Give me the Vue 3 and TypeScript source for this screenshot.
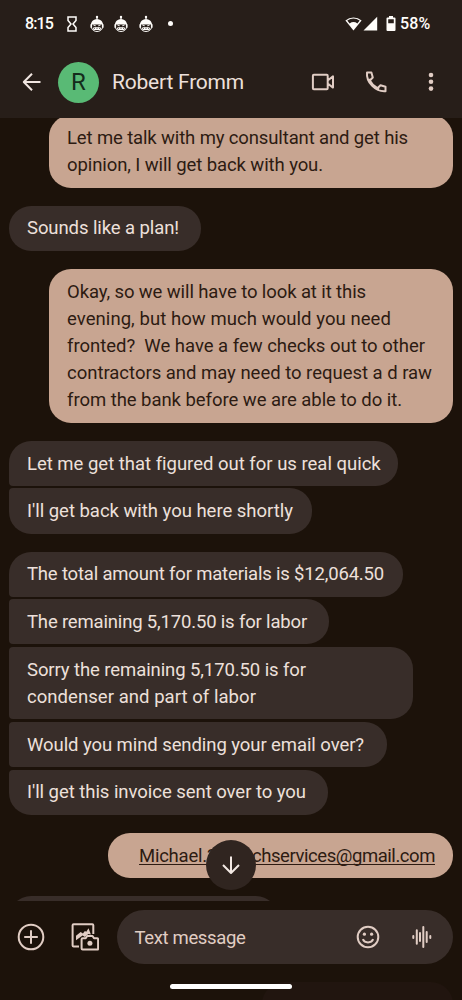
<script setup lang="ts">
import type { Directive } from 'vue'

interface Line { text: string; width: number }
interface Message {
  side: 'in' | 'out'
  place: 'single' | 'first' | 'middle' | 'last'
  width: number
  lines: Line[]
}

const messages: Message[] = [
  { side: 'out', place: 'single', width: 404, lines: [
    { text: 'Let me talk with my consultant and get his', width: 341 },
    { text: 'opinion, I will get back with you.', width: 256 },
  ] },
  { side: 'in', place: 'single', width: 191.5, lines: [{ text: 'Sounds like a plan!', width: 152 }] },
  { side: 'out', place: 'single', width: 404, lines: [
    { text: 'Okay, so we will have to look at it this', width: 299 },
    { text: 'evening, but how much would you need', width: 324 },
    { text: 'fronted?  We have a few checks out to other', width: 358 },
    { text: 'contractors and may need to request a d raw', width: 365 },
    { text: 'from the bank before we are able to do it.', width: 335 },
  ] },
  { side: 'in', place: 'first', width: 389, lines: [{ text: 'Let me get that figured out for us real quick', width: 353 }] },
  { side: 'in', place: 'last', width: 302.5, lines: [{ text: "I'll get back with you here shortly", width: 266 }] },
  { side: 'in', place: 'first', width: 393.5, lines: [{ text: 'The total amount for materials is $12,064.50', width: 357 }] },
  { side: 'in', place: 'middle', width: 320, lines: [{ text: 'The remaining 5,170.50 is for labor', width: 280 }] },
  { side: 'in', place: 'middle', width: 404, lines: [
    { text: 'Sorry the remaining 5,170.50 is for', width: 279 },
    { text: 'condenser and part of labor', width: 229 },
  ] },
  { side: 'in', place: 'middle', width: 378, lines: [{ text: 'Would you mind sending your email over?', width: 337 }] },
  { side: 'in', place: 'last', width: 318.5, lines: [{ text: "I'll get this invoice sent over to you", width: 279 }] },
]

// Distributes tracking so a label occupies its intended measure.
const vMeasure: Directive<HTMLElement, number> = {
  mounted(el, { value }) {
    const natural = el.getBoundingClientRect().width
    const count = (el.textContent ?? '').length
    el.style.letterSpacing = `${(value - natural) / count}px`
  },
}
</script>

<template>
  <div class="phone">
    <header class="top">
      <div class="status">
        <span class="time"><span v-measure="28">8:15</span></span>
        <svg class="hourglass" viewBox="0 0 10 16" width="10" height="16"><path d="M1 1h8v3.4L6 8l3 3.6V15H1v-3.4L4 8 1 4.4Z" /></svg>
        <svg v-for="n in 3" :key="n" class="bot" viewBox="0 0 14 18" width="14" height="18">
          <circle cx="7" cy="2" r="1.2" /><path d="M6.4 2h1.2v3H6.4zM1 9.6C1.3 2.4 12.7 2.4 13 9.6zM.4 9.2h1.5v3.6H.4zM12.1 9.2h1.5v3.6h-1.5z" />
          <path class="thin" d="M1.6 8.5v4.3c1 4.9 9.8 4.9 10.8 0V8.5M3.3 9.9l2.4.9M10.7 9.9l-2.4.9M3.6 12.8h6.8v1.7H3.6zM5.5 12.6v2M7 12.6v2M8.5 12.6v2" />
        </svg>
        <i class="dot"></i>
        <div class="signals">
          <svg viewBox="0 0 17 15" width="17" height="15"><path d="M8.5 14.5.4 4.4a13.2 13.2 0 0 1 16.2 0Z" /><path class="wifi-gap" d="M2.3 4.5a11.2 11.2 0 0 1 12.4 0L12.4 7.4a6.6 6.6 0 0 0-7.8 0Z" /></svg>
          <svg viewBox="0 0 15 15" width="15" height="15"><path d="M14.2.7v13.8H.5Z" /></svg>
          <svg class="battery" viewBox="0 0 10 15" width="10" height="15"><path fill-rule="evenodd" d="M3 0h4v1.5h1.5q1 0 1 1V14q0 1-1 1h-7q-1 0-1-1V2.5q0-1 1-1H3ZM2.2 3.2v4.1h5.6V3.2Z" /></svg>
          <span class="percent"><span v-measure="30.5">58%</span></span>
        </div>
      </div>
      <div class="bar">
        <svg class="back" viewBox="0 0 20 20" width="20" height="20"><path d="M18.5 10H2M10 1.8 1.8 10l8.2 8.2" /></svg>
        <div class="avatar">R</div>
        <div class="name"><span v-measure="132">Robert Fromm</span></div>
        <svg class="video" viewBox="0 0 24 18" width="24" height="18"><path d="M2.8 1.8h13q.9 0 .9.9v12.6q0 .9-.9.9h-13q-.9 0-.9-.9V2.7q0-.9.9-.9ZM17 7.2l5-3.8v11.2l-5-3.8" /></svg>
        <svg class="call" viewBox="0 0 24 24" width="24" height="24"><path d="M3 2.5h4.4l1.4 5-3 3c1.7 3.4 4.4 6 7.7 7.7l3-3 5 1.5v4.5C11.8 22 2 12.5 3 2.5ZM4 9.8l2.3-.1M14.2 19.7l.1-2" /></svg>
        <svg class="more" viewBox="0 0 6 20" width="6" height="20"><circle cx="3" cy="3" r="2.3" /><circle cx="3" cy="9.8" r="2.3" /><circle cx="3" cy="16.6" r="2.3" /></svg>
      </div>
    </header>

    <main class="thread">
      <div v-for="(message, i) in messages" :key="i" class="bubble" :class="[message.side, message.place]" :style="{ width: message.width + 'px' }">
        <div v-for="line in message.lines" :key="line.text" class="line"><span v-measure="line.width">{{ line.text }}</span></div>
      </div>
      <div class="bubble out single email">
        <div class="line address"><span v-measure="78">Michael.3</span><span class="rest"><span v-measure="183">chservices@gmail.com</span></span></div>
        <button class="jump" aria-label="Scroll down"><svg viewBox="0 0 20 20" width="20" height="20"><path d="M10 1.5v16M2 10l8 8 8-8" /></svg></button>
      </div>
      <div class="bubble in first clipped"></div>
    </main>

    <footer class="bottom">
      <div class="composer">
        <svg class="plus" viewBox="0 0 28 28" width="28" height="28"><circle cx="14" cy="14" r="12.3" /><path d="M14 7.2v13.6M7.2 14h13.6" /></svg>
        <svg class="gallery" viewBox="0 0 28 28" width="28" height="28">
          <path d="M22.3 11V2.3q0-1-1-1H2.6q-1 0-1 1v20.2q0 1 1 1H8" />
          <path class="hill" d="M5 17.2v-4.4l4.7-3.9 2.2 1.6 2-2.5 1.4.8 2.2-3.6 2.4 6.3-2.6-.6-3.4 3.1-2.3-1.6Z" />
          <path class="camera" d="M11.6 15.2h3.1l1.5-2.2h5.3l1.5 2.2h3.1q1 0 1 1v9.4q0 1-1 1H11.6q-1 0-1-1v-9.4q0-1 1-1Z" /><circle class="lens" cx="18.9" cy="20.3" r="2.5" />
        </svg>
        <div class="field">
          <span class="placeholder"><span v-measure="111">Text message</span></span>
          <svg class="smile" viewBox="0 0 24 24" width="24" height="24"><circle cx="12" cy="12" r="10.3" /><path d="M6.8 14.2c1.8 4.3 8.6 4.3 10.4 0" /><circle class="eye" cx="8.4" cy="9.2" r="1.6" /><circle class="eye" cx="15.6" cy="9.2" r="1.6" /></svg>
          <svg class="voice" viewBox="0 0 20 24" width="20" height="24"><path d="M1.3 11v2M4.8 5.3v13.4M8 8v8M11.3 2v20M14.7 7v10M18.3 11v2" /></svg>
        </div>
      </div>
      <div class="home"></div>
      <div class="under"></div>
    </footer>
  </div>
</template>

<style>
body { background: #1c120a; }
</style>

<style scoped>
.phone { width: 462px; height: 1000px; display: flex; flex-direction: column; overflow: hidden; background: #1c120a; color: #ede0db; font-family: Roboto, "Noto Sans", sans-serif; }
svg { display: block; flex: none; fill: none; stroke: currentColor; stroke-width: 2; stroke-linejoin: round; }
.top { height: 118px; flex: none; background: #271e19; position: relative; z-index: 1; }
.status { height: 46px; display: flex; align-items: center; padding: 1px 31px 0 25px; box-sizing: border-box; color: #fffdfa; font-size: 16px; font-weight: 500; white-space: nowrap; }
.time { width: 28px; }
.hourglass { margin: 0 13px 0 13.5px; stroke-width: 1.5; stroke-linejoin: miter; }
.bot { margin-right: 10.7px; fill: currentColor; stroke: none; }
.thin { fill: none; stroke: currentColor; stroke-width: 1; }
.dot { width: 5px; height: 5px; border-radius: 50%; background: #fffdfa; margin-left: 4.5px; }
.signals { margin-left: auto; display: flex; align-items: center; }
.signals svg { fill: currentColor; stroke: none; margin-right: 1px; }
.signals .battery { margin: 0 4px 0 7px; }
.signals .wifi-gap { fill: #271e19; }
.percent { width: 31px; }
.bar { height: 72px; display: flex; align-items: center; padding: 0 28px 0 22px; color: #e1cdc4; }
.back { color: #f1e6e1; margin-right: 16px; }
.avatar { width: 41px; height: 41px; border-radius: 50%; background: #59ba75; color: #142c1c; display: flex; align-items: center; justify-content: center; font-size: 24px; }
.name { margin-left: 13px; width: 198.5px; color: #ede0db; font-size: 21px; white-space: nowrap; }
.video { margin-right: 29.5px; }
.call { margin-right: 40px; }
.more { fill: currentColor; stroke: none; }
.thread { height: 783px; flex: none; display: flex; flex-direction: column; padding: 0 9px; box-sizing: border-box; overflow: hidden; }
.bubble { flex: none; box-sizing: border-box; padding: 9.9px 18px 8.1px; margin-bottom: 18px; border-radius: 22px; font-size: 18.5px; line-height: 27.2px; white-space: pre; }
.bubble:first-child { margin-top: -2.9px; }
.in { align-self: flex-start; background: #382d29; }
.out { align-self: flex-end; background: #c8a591; color: #2d1b12; }
.first, .middle { margin-bottom: 2.5px; border-bottom-left-radius: 4px; }
.middle, .last { border-top-left-radius: 4px; }
.email { position: relative; width: 345px; padding-top: 9px; padding-left: 31px; height: 45.2px; margin-top: .2px; margin-bottom: 17.6px; }
.address { display: flex; width: 296px; border-bottom: 1px solid #2d1b12; height: 22px; line-height: 28px; }
.rest { margin-left: auto; width: 183px; }
.jump { position: absolute; left: 98px; top: 6.8px; width: 50px; height: 50px; border: 0; border-radius: 50%; background: #302520; color: #f3e9e4; display: flex; align-items: center; justify-content: center; padding: 0; }
.clipped { width: 269px; height: 45px; }
.bottom { height: 99px; flex: none; position: relative; overflow: hidden; }
.composer { display: flex; align-items: center; height: 54px; padding: 9px 9px 0 17px; color: #e1cdc4; }
.gallery { margin: 0 18px 0 26px; }
.hill, .lens, .eye { fill: currentColor; stroke: none; }
.camera { fill: #1c120a; }
.field { flex: 1; height: 54px; border-radius: 27px; background: #382d29; display: flex; align-items: center; padding: 0 21.5px 0 18px; margin-left: -.5px; }
.placeholder { flex: 1; font-size: 18.5px; white-space: nowrap; padding-top: 1px; }
.smile { margin-right: 32px; }
.voice { stroke-linecap: round; }
.home { position: relative; z-index: 1; width: 122px; height: 5px; margin: 20px auto 0; border-radius: 3px; background: #fff; }
.under { position: absolute; right: 9px; top: 81px; width: 191px; height: 45px; border-radius: 22px; background: #21150f; }
</style>
